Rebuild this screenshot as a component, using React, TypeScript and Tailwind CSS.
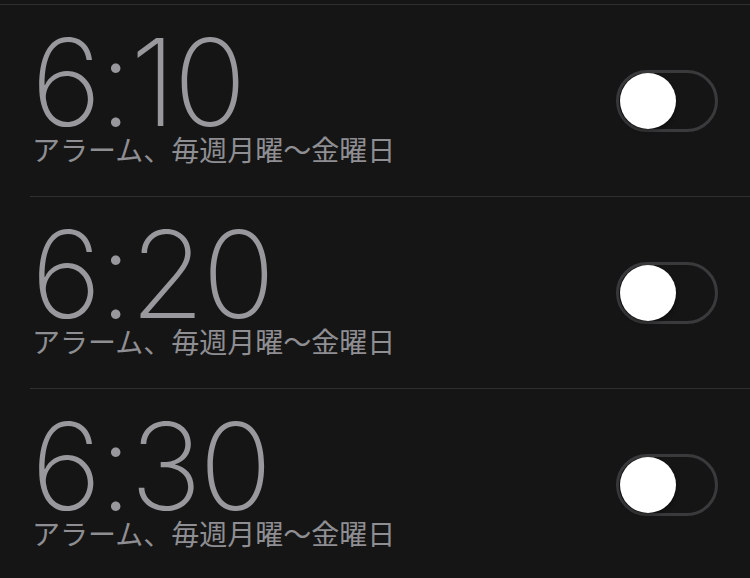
import React, { useState } from 'react';

type Alarm = {
  id: number;
  time: string;
  label: string;
  on: boolean;
};

const initialAlarms: Alarm[] = [
  { id: 1, time: '6:10', label: 'アラーム、毎週月曜〜金曜日', on: false },
  { id: 2, time: '6:20', label: 'アラーム、毎週月曜〜金曜日', on: false },
  { id: 3, time: '6:30', label: 'アラーム、毎週月曜〜金曜日', on: false },
];

const Toggle: React.FC<{ on: boolean; onChange: () => void }> = ({ on, onChange }) => (
  <button
    onClick={onChange}
    className={`relative w-[102px] h-[62px] rounded-full border-[3px] flex items-center px-[1px] transition-colors ${
      on ? 'bg-[#34c759] border-[#34c759] justify-end' : 'bg-transparent border-[#3a3a3c] justify-start'
    }`}
  >
    <span className="block w-[56px] h-[56px] rounded-full bg-white shadow-[0_2px_4px_rgba(0,0,0,0.4)]" />
  </button>
);

export default function App() {
  const [alarms, setAlarms] = useState(initialAlarms);

  const toggle = (id: number) =>
    setAlarms(prev => prev.map(a => (a.id === id ? { ...a, on: !a.on } : a)));

  return (
    <div className="w-[750px] h-[578px] overflow-hidden bg-[#151515] pt-[4px]">
      <div className="border-t border-[#2e2e2e]">
        {alarms.map((a) => (
          <div key={a.id} className="pl-[30px]">
            <div className="flex items-center justify-between h-[192px] pl-[1px] pr-[32px] border-b border-[#2e2e2e]">
              <div className="flex flex-col -mt-[8px]">
                <div
                  className="text-[121px] leading-[104px] font-extralight text-[#98989d] tracking-[-2.5px]"
                  style={{ fontFamily: 'Inter, Roboto, sans-serif' }}
                >
                  {a.time}
                </div>
                <div
                  className="text-[28px] leading-[30px] text-[#8e8e93] pl-[1px]"
                  style={{ fontFamily: '"Noto Sans CJK JP", "Noto Sans", sans-serif' }}
                >
                  {a.label}
                </div>
              </div>
              <Toggle on={a.on} onChange={() => toggle(a.id)} />
            </div>
          </div>
        ))}
      </div>
    </div>
  );
}
